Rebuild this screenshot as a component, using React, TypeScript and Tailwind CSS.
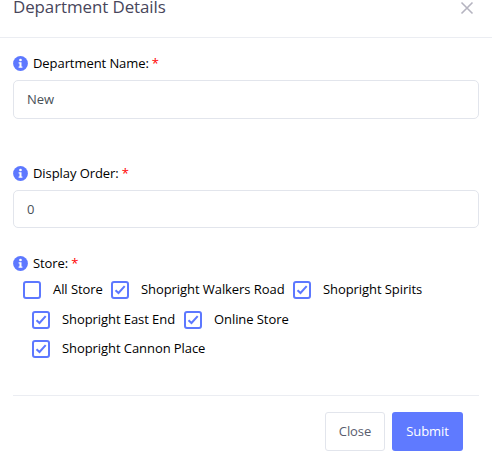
import React from "react";

function Info() {
  return (
    <svg width="15" height="15" viewBox="0 0 15 15" className="block shrink-0">
      <circle cx="7.5" cy="7.5" r="7.4" fill="#5d78ff" />
      <circle cx="7.5" cy="4" r="1.35" fill="#fff" />
      <path d="M5.6 6.2h2.9v4.2h.9v1.3H5.6v-1.3h.9V7.5h-.9z" fill="#fff" />
    </svg>
  );
}

function Label({ text }: { text: string }) {
  return (
    <div className="flex h-5 items-center">
      <Info />
      <span className="ml-[5px] whitespace-pre text-[13px] leading-5 text-black">
        {text}<span className="ml-[3px] text-[#ff0000]">*</span>
      </span>
    </div>
  );
}

function Check({ text, checked = true, width }: { text: string; checked?: boolean; width: string }) {
  return (
    <label className={`flex h-5 shrink-0 items-center whitespace-nowrap text-[13px] leading-5 text-black ${width}`}>
      <span className="mr-3 flex h-[18px] w-[18px] items-center justify-center rounded-[3px] border-2 border-[#5d78ff]">
        {checked && (
          <svg width="12" height="10" viewBox="0 0 12 10" fill="none">
            <path d="M1.5 5.2 4.5 8 10.7 1.2" stroke="#5d78ff" strokeWidth="2" />
          </svg>
        )}
      </span>
      <span className="-mt-0.5">{text}</span>
    </label>
  );
}

export default function App() {
  return (
    <div className="h-[460px] w-[492px] overflow-hidden bg-white font-['Open_Sans',sans-serif] tracking-[-0.07px]">
      <header className="flex h-[38px] justify-between border-b border-[#ebedf2] pl-[13px] pr-[18px]">
        <h5 className="text-[16.9px] leading-[14px] text-[#48465b]">Department Details</h5>
        <svg width="14" height="14" viewBox="0 0 14 14" className="mt-px">
          <path d="M1.5 1.5 12.5 12.5M12.5 1.5 1.5 12.5" stroke="#b5b4c0" strokeWidth="1.6" />
        </svg>
      </header>
      <main className="px-[13px] pt-[15px]">
        <Label text="Department Name:" />
        <div className="mt-[7px] flex h-[39px] items-center rounded-[5px] border border-[#e2e5ec] px-[13px] text-[13px] text-[#495057]">New</div>
        <div className="mt-[44px]"><Label text="Display Order:" /></div>
        <div className="mt-[7px] flex h-[38px] items-center rounded-[5px] border border-[#e2e5ec] px-[13px] pt-px text-[13px] text-[#495057]">0</div>
        <div className="mt-[25px]"><Label text="Store:" /></div>
        <div className="mt-[7px] flex pl-[10px]">
          <Check text="All Store" checked={false} width="w-[88px]" />
          <Check text="Shopright Walkers Road" width="w-[182px]" />
          <Check text="Shopright Spirits" width="w-[140px]" />
        </div>
        <div className="mt-[10px] flex pl-[19px]">
          <Check text="Shopright East End" width="w-[152px]" />
          <Check text="Online Store" width="w-[120px]" />
        </div>
        <div className="mt-[9px] flex pl-[19px]">
          <Check text="Shopright Cannon Place" width="w-[200px]" />
        </div>
      </main>
      <footer className="mx-[13px] mt-[36px] flex justify-end gap-[7px] border-t border-[#ebedf2] pr-4 pt-4">
        <button className="h-[39px] w-[60px] rounded-[3px] border border-[#e2e5ec] text-[13px] text-[#595d6e]">Close</button>
        <button className="h-[39px] w-[71px] rounded-[3px] bg-[#5f7aff] text-[13px] text-white">Submit</button>
      </footer>
    </div>
  );
}
